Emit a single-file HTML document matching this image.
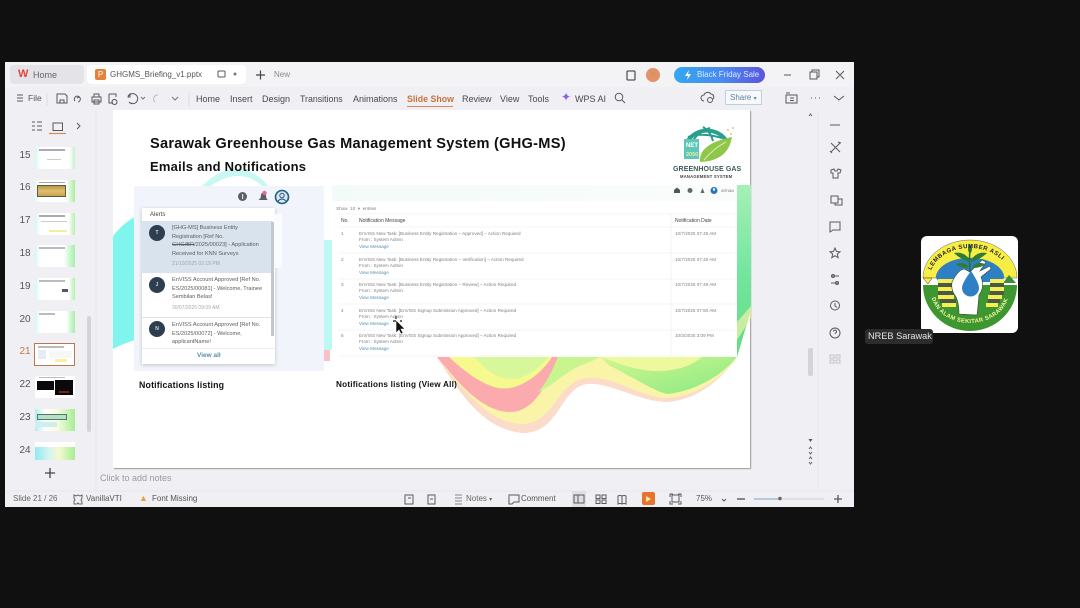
<!DOCTYPE html>
<html><head><meta charset="utf-8">
<style>
html,body{margin:0;padding:0;width:1080px;height:608px;overflow:hidden;background:#101011;font-family:"Liberation Sans",sans-serif}
.a{position:absolute}
.t{position:absolute;white-space:nowrap;color:#4a4a4e;font-size:9px;line-height:12px}
.n{position:absolute;left:17px;width:16px;text-align:center;font-size:10px;color:#555;line-height:12px}
.th{position:absolute;left:35px;width:40px;height:22px;background:#fff;overflow:hidden}
.rb{font-size:9px;color:#49494d;top:93px}
.nt{position:absolute;white-space:nowrap;font-size:4.6px;line-height:6.4px;color:#808084}
.al{position:absolute;left:172px;white-space:nowrap;font-size:5.6px;line-height:8.5px;color:#5c5c5c}
.av{position:absolute;left:149px;width:16px;height:16px;border-radius:50%;background:#2e3d4f;color:#ddd;font-size:5px;line-height:16px;text-align:center;font-weight:bold}
svg{position:absolute;overflow:visible}
</style></head><body>
<div class="a" style="left:5px;top:62px;width:849px;height:445px;background:#f0f0f4"></div>
<div class="a" style="left:5px;top:62px;width:849px;height:25px;background:#f3f3f6"></div>
<div class="a" style="left:10px;top:65px;width:74px;height:19px;background:#e4e4e8;border-radius:4px"></div>
<div class="a" style="left:87px;top:65px;width:159px;height:19px;background:#fff;border-radius:4px"></div>
<div class="t" style="left:18px;top:68px;color:#e0453f;font-size:11px;font-weight:bold">W</div>
<div class="t" style="left:33px;top:69px;color:#666">Home</div>
<div class="a" style="left:95px;top:69px;width:11px;height:11px;background:#e5813a;border-radius:2px;color:#fff;font-size:8px;line-height:11px;text-align:center">P</div>
<div class="t" style="left:110px;top:69px;color:#555;font-size:8px">GHGMS_Briefing_v1.pptx</div>
<svg style="left:0;top:0" width="1080" height="608" fill="none" stroke="#58585c" stroke-width="1">
<rect x="218" y="71" width="7" height="6" rx="1"/><circle cx="235" cy="74" r="1.5" fill="#777" stroke="none"/>
<path d="M256 75h9M260.500 70.500v9" stroke="#444" stroke-width="1.200"/>
<rect x="627" y="71" width="8" height="9" rx="1" stroke-width="1.300"/>
<path d="M784 75h7M810 72h7v7h-7zM812 72v-2h7v7h-2M836 71l8 8M844 71l-8 8"/>
<path d="M17 95h6M17 98h6M17 101h6M57 94h8l2 2v7h-10zM60 103v-3h4v3M75 101a3 3 0 1 1 3 1M77 98l2-1M92 97h9v5h-9zM94 97v-3h5v3M94 100h5v4h-5zM109 94h7v3M109 94v9h4M117 102a2.500 2.500 0 1 1 0-.1M128 96l2-2v3h-2a5 5 0 1 1 1 5"/>
<path d="M141 97l2 2 2-2" stroke="#777"/><path d="M155 102a4 4 0 0 1 3-7" stroke="#bbb"/>
<path d="M172 97l3 3 3-3" stroke="#777"/>
<path d="M189 93v13" stroke="#ddd"/><path d="M47 93v13" stroke="#ddd"/>
<circle cx="619" cy="97" r="3.800"/><path d="M622 100l3 3"/>
<path d="M704 101a3 3 0 0 1 0-6 4 4 0 0 1 7-1 3 3 0 0 1 2 5"/><circle cx="710" cy="100" r="2.500"/>
<path d="M786 95h11v8h-11zM786 93h4M790 98h4M790 100.500h4"/>
<path d="M811 98h1M815 98h1M819 98h1M834 96l5 4 5-4"/>
<path d="M32 122h3M32 126h3M32 130h3M37 122h5M37 126h5M37 130h5" stroke-width="1"/>
<rect x="53" y="123" width="9.500" height="7.500"/><path d="M49 133.500h17" stroke="#d6895a" stroke-width="1.200"/>
<path d="M77 123l3 3-3 3"/>
<path d="M45 473h10M50 468v10" stroke="#444" stroke-width="1.300"/>
<path d="M96 110v381M5 491h849M818 110v381" stroke="#e8e8ec"/>
</svg>
<div class="a" style="left:646px;top:68px;width:14px;height:14px;background:#e59068;border-radius:50%;color:#b95;font-size:6px;line-height:14px;text-align:center">N</div>
<div class="a" style="left:674px;top:67px;width:91px;height:16px;border-radius:8px;background:linear-gradient(90deg,#33a8f0,#4a88ee 55%,#5a55dd)"></div>
<div class="t" style="left:697px;top:69px;color:#dbeafe;font-size:8px">Black Friday Sale</div>
<svg style="left:0;top:0" width="1080" height="608"><path d="M689 70l-4 6h3l-1 4 4-6h-3z" fill="#fff"/></svg>
<div class="t" style="left:274px;top:69px;color:#8a8a8e;font-size:8px">New</div>
<div class="t" style="left:28px;top:92px;color:#555;font-size:8.500px">File</div>
<div class="t rb" style="left:196px">Home</div>
<div class="t rb" style="left:230px">Insert</div>
<div class="t rb" style="left:262px">Design</div>
<div class="t rb" style="left:300px;font-size:8.800px">Transitions</div>
<div class="t rb" style="left:353px">Animations</div>
<div class="t rb" style="left:407px;color:#c8703a;font-weight:bold;font-size:8.800px">Slide Show</div>
<div class="a" style="left:407px;top:106px;width:46px;height:1px;background:#d88a58"></div>
<div class="t rb" style="left:462px">Review</div>
<div class="t rb" style="left:500px">View</div>
<div class="t rb" style="left:528px">Tools</div>
<div class="t" style="left:561px;top:91px;color:#8e5fe0;font-size:12px">✦</div>
<div class="t rb" style="left:575px">WPS AI</div>
<div class="a" style="left:725px;top:90px;width:37px;height:15px;box-sizing:border-box;border:1px solid #b9d3df;background:#f8f8fa;color:#5a86a0;font-size:8px;line-height:13px;padding-left:4px">Share <span style="font-size:6px">▾</span></div>

<!-- thumbnails -->
<div class="n" style="top:150px">15</div><div class="n" style="top:182px">16</div><div class="n" style="top:215px">17</div><div class="n" style="top:248px">18</div><div class="n" style="top:281px">19</div><div class="n" style="top:314px">20</div><div class="n" style="top:346px;color:#c07a4a">21</div><div class="n" style="top:379px">22</div><div class="n" style="top:412px">23</div><div class="n" style="top:445px">24</div>
<div class="th" style="top:147px;background:linear-gradient(90deg,#d5f6f3 0,#fff 14%,#fff 86%,#c8f0cc 100%)"><div class="a" style="left:4px;top:2px;width:26px;height:1.500px;background:#aab"></div><div class="a" style="left:12px;top:12px;width:14px;height:1px;background:#ccc"></div></div>
<div class="th" style="top:180px;background:linear-gradient(90deg,#e4f8f3 0,#fff 14%,#fff 78%,#a8ee9c 100%)"><div class="a" style="left:2px;top:5px;width:27px;height:10px;background:linear-gradient(#b89848,#e0c070,#c8a050);border:1px solid #5c5a40"></div><div class="a" style="left:4px;top:2px;width:26px;height:1px;background:#aaa"></div></div>
<div class="th" style="top:213px;background:linear-gradient(90deg,#d5f6f3 0,#fff 14%,#fff 84%,#b4efaa 100%)"><div class="a" style="left:4px;top:2px;width:26px;height:1.500px;background:#aaa"></div><div class="a" style="left:6px;top:8px;width:26px;height:1px;background:#ccc"></div><div class="a" style="left:14px;top:17px;width:18px;height:2px;background:#f3ee9c"></div></div>
<div class="th" style="top:245px;background:linear-gradient(90deg,#d5f6f3 0,#fff 14%,#fff 72%,#a5eeaa 100%)"><div class="a" style="left:4px;top:2px;width:26px;height:1.500px;background:#bbb"></div></div>
<div class="th" style="top:278px;background:linear-gradient(90deg,#d5f6f3 0,#fff 14%,#fff 84%,#b4efaa 100%)"><div class="a" style="left:4px;top:2px;width:26px;height:1.500px;background:#bbb"></div><div class="a" style="left:27px;top:11px;width:6px;height:3px;background:#556"></div></div>
<div class="th" style="top:311px;background:linear-gradient(90deg,#d5f6f3 0,#fff 14%,#fff 78%,#a5eeaa 100%)"><div class="a" style="left:4px;top:2px;width:16px;height:2px;background:#bbb"></div></div>
<div class="a" style="left:34px;top:343px;width:41px;height:23px;box-sizing:border-box;border:1px solid #b87a4c;background:#fff"><div class="a" style="left:3px;top:2px;width:26px;height:1.500px;background:#bbb"></div><div class="a" style="left:3px;top:6px;width:8px;height:9px;background:#e4ecf5"></div><div class="a" style="left:14px;top:7px;width:23px;height:7px;background:#f6f8f8"></div><div class="a" style="left:20px;top:15px;width:12px;height:3px;background:#f6f0a8"></div></div>
<div class="th" style="top:376px"><div class="a" style="left:2px;top:5px;width:17px;height:9px;background:#08090c"></div><div class="a" style="left:20px;top:4px;width:18px;height:15px;background:#0a0a0c"></div><div class="a" style="left:4px;top:1px;width:26px;height:1px;background:#bbb"></div><div class="a" style="left:24px;top:15px;width:10px;height:2px;background:#722"></div></div>
<div class="th" style="top:409px;background:linear-gradient(90deg,#b0eeee 0,#fff 25%,#fbfbe0 55%,#a5ee95 100%)"><div class="a" style="left:2px;top:5px;width:28px;height:4px;background:#b8dfc8;border:1px solid #4a7a70"></div><div class="a" style="left:0;top:13px;width:22px;height:5px;background:#cfeef0"></div></div>
<div class="th" style="top:442px;height:18px;background:linear-gradient(90deg,#90eaf0 0,#d5f4f2 35%,#f6f8d0 60%,#a5ee95 100%)"><div class="a" style="left:0;top:0;width:40px;height:5px;background:#fff"></div></div>
<div class="a" style="left:87px;top:316px;width:4px;height:116px;background:#d4d4d8;border-radius:2px"></div>

<!-- slide -->
<div class="a" style="left:113px;top:110px;width:637px;height:358px;background:#fff;box-shadow:1px 1px 1px #999"></div>
<svg style="left:0;top:0" width="1080" height="608">
<defs><linearGradient id="gw" x1="0" y1="0" x2="1" y2="1"><stop offset="0" stop-color="#d4f68e"/><stop offset="1" stop-color="#86ea84"/></linearGradient>
<linearGradient id="gr" x1="0" y1="0" x2="0" y2="1"><stop offset="0" stop-color="#a6f0b8"/><stop offset=".5" stop-color="#74e6a0"/><stop offset="1" stop-color="#62dc82"/></linearGradient>
<clipPath id="sl"><rect x="113" y="110" width="637" height="358"/></clipPath></defs>
<path d="M113 236Q124 222 135 217V340Q122 344 113 349z" fill="#80f5ee"/>
<path d="M202 186Q220 168 238 169Q256 170 268 186z" fill="#c8f8f2"/>
<path d="M210 186Q226 176 238 176Q252 176 262 186z" fill="#fff"/>
<path d="M324 240h8v110h-8z" fill="#a2f5ee" opacity=".7"/>
<path d="M437 357C455 385 480 430 523 433C560 433 560 388 587 384C610 382 640 402 667 402C700 400 725 375 737 357z" fill="#fbdccb"/>
<path d="M437 357C458 385 490 425 523 424C555 422 555 385 585 378C615 375 640 398 667 398C700 396 725 375 737 357z" fill="#f9f4a8"/>
<path d="M437 357C455 378 480 412 510 412C535 412 548 382 558 357z" fill="#fbabae"/>
<path d="M449 357C465 372 490 392 510 388C530 384 545 368 552 357z" fill="#f5f98e"/>
<path d="M475 357Q495 383 520 378Q540 370 548 357z" fill="#d8f79a"/>
<path d="M558 357C552 372 545 385 538 392C555 385 565 370 590 362L600 357z" fill="#c8f590"/>
<path d="M610 366C635 378 655 392 668 394C700 390 725 372 737 357H600z" fill="url(#gw)"/>
<path d="M615 362C640 372 670 376 695 362L702 357H600z" fill="#eef89c"/>
<path d="M737 185H751V310L737 357z" fill="url(#gr)"/>
<path d="M737 322L751 306V318L737 340z" fill="#f2f2a8" opacity=".7"/>
<path d="M324 350h6v11h-6z" fill="#f8b0ba" opacity=".8"/>
</svg>
<div class="t" style="left:150px;top:136px;font-size:14.600px;line-height:16px;font-weight:bold;color:#111;letter-spacing:.26px">Sarawak Greenhouse Gas Management System (GHG-MS)</div>
<div class="t" style="left:150px;top:159px;font-size:13px;line-height:16px;font-weight:bold;color:#111;letter-spacing:.22px">Emails and Notifications</div>

<!-- logo -->
<svg style="left:0;top:0" width="1080" height="608">
<path d="M686 145a22 20 0 0 1 41-3" fill="none" stroke="#28a08e" stroke-width="4"/>
<path d="M690 145q8-14 20-17M703 127q8 5 10 14M688 137q14-5 34 1" fill="none" stroke="#2a9c8c" stroke-width="2"/>
<rect x="684" y="139" width="15" height="20" fill="#5ec8b8"/>
<text x="686" y="147" font-family="Liberation Sans" font-size="6" font-weight="bold" fill="#fff">NET</text>
<text x="686" y="156" font-family="Liberation Sans" font-size="5.500" font-weight="bold" fill="#e8f29a">2050</text>
<path d="M700 162q-2-18 32-25q-4 24-32 25z" fill="#8fc74a"/>
<path d="M704 160q10-12 22-18" stroke="#d6ebaa" fill="none"/>
<circle cx="728" cy="130" r="1" fill="#d8c888"/><circle cx="731" cy="134" r="1" fill="#d8c888"/><circle cx="733" cy="128" r="1" fill="#d8c888"/>
</svg>
<div class="t" style="left:673px;top:165px;font-size:7px;line-height:9px;font-weight:bold;color:#3a5a5a;letter-spacing:.1px">GREENHOUSE GAS</div>
<div class="t" style="left:680px;top:174px;font-size:4.200px;line-height:6px;font-weight:bold;color:#444;letter-spacing:.2px">MANAGEMENT SYSTEM</div>

<!-- left screenshot -->
<div class="a" style="left:134px;top:186px;width:190px;height:185px;background:#f1f5fb"></div>
<div class="a" style="left:142px;top:208px;width:133px;height:156px;background:#fff;box-shadow:0 1px 4px rgba(0,0,0,.2)"></div>
<div class="a" style="left:274px;top:214px;width:8px;height:54px;background:#fafbfd"></div>
<div class="t" style="left:150px;top:211px;font-size:6px;line-height:9px;color:#444">Alerts</div>
<div class="a" style="left:142px;top:221px;width:131px;height:52px;background:#d8e3ee"></div>
<div class="a" style="left:271px;top:222px;width:3px;height:114px;background:#c4c8ce"></div>
<div class="a" style="left:142px;top:317px;width:129px;height:1px;background:#e2e2e2"></div>
<div class="a" style="left:142px;top:348px;width:133px;height:1px;background:#eee"></div>
<div class="av" style="top:225px">T</div><div class="av" style="top:277px">J</div><div class="av" style="top:321px">N</div>
<div class="al" style="top:224px">[GHG-MS] Business Entity<br>Registration [Ref No.<br><s>GHG/BR</s>/2025/00023] - Application<br>Received for KNN Surveys</div>
<div class="al" style="top:260px;font-size:5px;color:#9aa">21/10/2025 02:19 PM</div>
<div class="al" style="top:276px">EnVISS Account Approved [Ref No.<br>ES/2025/00081] - Welcome, Trainee<br>Sembilan Belas!</div>
<div class="al" style="top:304px;font-size:5px;color:#aaa">30/07/2025 09:09 AM</div>
<div class="al" style="top:321px">EnVISS Account Approved [Ref No.<br>ES/2025/00072] - Welcome,<br>applicantName!</div>
<div class="t" style="left:197px;top:351px;font-size:6.500px;line-height:10px;color:#5c8ea8;font-weight:bold">View all</div>
<svg style="left:0;top:0" width="1080" height="608">
<circle cx="242.500" cy="196.500" r="4.500" fill="#5a6068"/><rect x="242" y="194" width="1.200" height="5" fill="#ddd"/>
<path d="M258 200q3-1 3-5a2.500 2.500 0 0 1 5 0q0 4 2 5z" fill="#5a5c68"/><circle cx="264.500" cy="193" r="2.200" fill="#e86a8a"/>
<circle cx="282" cy="197" r="6.500" fill="#d8e4ee" stroke="#1f5f82" stroke-width="1.600"/><circle cx="282" cy="195.500" r="2.200" fill="none" stroke="#1f5f82"/><path d="M278 201q4-4 8 0" fill="none" stroke="#1f5f82"/>
</svg>
<div class="t" style="left:139px;top:380px;font-size:8.800px;line-height:11px;font-weight:bold;color:#111;letter-spacing:.17px">Notifications listing</div>

<!-- right screenshot -->
<div class="a" style="left:332px;top:185px;width:405px;height:172px;background:#fff"></div>
<div class="a" style="left:332px;top:185px;width:405px;height:16px;background:linear-gradient(90deg,#f3fbf8,#fafcfc)"></div>
<svg style="left:0;top:0" width="1080" height="608">
<path d="M674 190l3-2.500 3 2.500v3h-6z" fill="#555"/><circle cx="690" cy="190.500" r="2.500" fill="#666"/><path d="M700.500 193l2-5 2 5z" fill="#666"/>
<circle cx="714" cy="190.500" r="3.500" fill="#2c74b5"/><circle cx="714" cy="189.500" r="1.200" fill="#fff"/>
<path d="M338 214H737M338 227H737M338 253H737M338 279H737M338 304H737M338 330H737M338 356H737M671 214V356" stroke="#f0f1f3" stroke-width=".8"/>
<path d="M396 320l0 13 3-3 2 4 2-1-2-4h4z" fill="#111" stroke="#fff" stroke-width=".6"/>
<path d="M396 316v3M393 321h3M400 321h2" stroke="#111" stroke-width="1.200"/>
</svg>
<div class="nt" style="left:721px;top:188px">arinaa</div>
<div class="nt" style="left:336px;top:206px">Show&nbsp; 10 &nbsp;▾&nbsp; entries</div>
<div class="nt" style="left:341px;top:218px;color:#444;font-size:5px">No.</div>
<div class="nt" style="left:359px;top:218px;color:#444;font-size:5px">Notification Message</div>
<div class="nt" style="left:675px;top:218px;color:#444;font-size:5px">Notification Date</div>
<div class="nt" style="left:341px;top:231px">1</div>
<div class="nt" style="left:359px;top:231px">EnVISS New Task: [Business Entity Registration – Approved] – Action Required<br>From : System Admin<br><span style="color:#5b8fb0">View Message</span></div>
<div class="nt" style="left:675px;top:231px">10/7/2025 07:49 AM</div>
<div class="nt" style="left:341px;top:257px">2</div>
<div class="nt" style="left:359px;top:257px">EnVISS New Task: [Business Entity Registration – Verification] – Action Required<br>From : System Admin<br><span style="color:#5b8fb0">View Message</span></div>
<div class="nt" style="left:675px;top:257px">10/7/2025 07:49 AM</div>
<div class="nt" style="left:341px;top:282px">3</div>
<div class="nt" style="left:359px;top:282px">EnVISS New Task: [Business Entity Registration – Review] – Action Required<br>From : System Admin<br><span style="color:#5b8fb0">View Message</span></div>
<div class="nt" style="left:675px;top:282px">10/7/2025 07:49 AM</div>
<div class="nt" style="left:341px;top:308px">4</div>
<div class="nt" style="left:359px;top:308px">EnVISS New Task: [EnVISS Signup Submission Approved] – Action Required<br>From : System Admin<br><span style="color:#5b8fb0">View Message</span></div>
<div class="nt" style="left:675px;top:308px">10/7/2025 07:50 AM</div>
<div class="nt" style="left:341px;top:333px">5</div>
<div class="nt" style="left:359px;top:333px">EnVISS New Task: [EnVISS Signup Submission Approved] – Action Required<br>From : System Admin<br><span style="color:#5b8fb0">View Message</span></div>
<div class="nt" style="left:675px;top:333px">10/3/2025 3:09 PM</div>
<div class="t" style="left:336px;top:379px;font-size:8.200px;line-height:11px;font-weight:bold;color:#111;letter-spacing:.2px">Notifications listing (View All)</div>

<!-- right rail + scroll -->
<svg style="left:0;top:0" width="1080" height="608" fill="none" stroke="#5a5a5e" stroke-width="1">
<path d="M830 125h10"/>
<path d="M831 143l9 9M840 143l-9 9M838 142l3 1M830 151l2 2"/>
<path d="M831 170l3-1 1 2h2l1-2 3 1-1 3-2 0v5h-5v-5l-2 0z"/>
<path d="M831 196h7v7h-7zM838 199h4v6h-7v-2"/>
<path d="M830 222h10v8h-7l-3 2z"/>
<path d="M835 248l1.500 3.500 3.500.3-2.700 2.300.9 3.600-3.200-2-3.200 2 .9-3.600-2.700-2.300 3.500-.3z"/>
<path d="M831 276h8M831 283h8"/><circle cx="833" cy="276" r="1.500"/><circle cx="837" cy="283" r="1.500"/>
<circle cx="835" cy="305.500" r="4.500"/><path d="M835 303v3l2 1.500"/>
<circle cx="835" cy="333" r="5"/><path d="M833.500 331.500a1.500 1.500 0 1 1 2 1.500q-.5.300-.5 1"/>
<g stroke="#c4c4c8"><rect x="830" y="355" width="4" height="3"/><rect x="836" y="355" width="4" height="3"/><rect x="830" y="360" width="4" height="3"/><rect x="836" y="360" width="4" height="3"/></g>
<path d="M809 116l1.500-2 1.500 2" stroke="#666"/>
<path d="M808.500 439h4l-2 3z" fill="#555" stroke="none"/>
<path d="M809 449l1.500-2 1.500 2M809 452l1.500 2 1.500-2M809 459l1.500-2 1.500 2M809 462l1.500 2 1.500-2" stroke="#666"/>
</svg>
<div class="a" style="left:808px;top:348px;width:5px;height:28px;background:#d4d4d8;border-radius:2px"></div>

<!-- notes / status -->
<div class="t" style="left:100px;top:472px;font-size:9px;color:#9a9a9e">Click to add notes</div>
<div class="t" style="left:13px;top:493px;font-size:8px;color:#666">Slide 21 / 26</div>
<svg style="left:0;top:0" width="1080" height="608" fill="none" stroke="#666"><path d="M74 495l2 1 2-1 2 1 2-1v3l-1 2 1 2v2h-3l-1-1-1 1h-3v-3l1-1-1-2z"/></svg>
<div class="t" style="left:86px;top:493px;font-size:8px;color:#555">VanillaVTI</div>
<div class="t" style="left:139px;top:492px;font-size:9px;color:#e8a33c">▲</div>
<div class="t" style="left:152px;top:493px;font-size:8px;color:#555">Font Missing</div>
<div class="t" style="left:466px;top:493px;font-size:8px;color:#666">Notes <span style="font-size:6px">▾</span></div>
<div class="t" style="left:521px;top:493px;font-size:8px;color:#555">Comment</div>
<div class="t" style="left:696px;top:493px;font-size:8px;color:#555">75%</div>
<div class="a" style="left:572px;top:491px;width:14px;height:16px;background:#e0e0e4"></div>
<div class="a" style="left:642px;top:492px;width:13px;height:13px;background:#e8732e;border-radius:2px"></div>
<svg style="left:0;top:0" width="1080" height="608" fill="none" stroke="#5a5a5e" stroke-width="1">
<rect x="405" y="495" width="8" height="9"/><path d="M408 498h3"/>
<rect x="428" y="495" width="7" height="9"/><path d="M430 499h3"/>
<path d="M455 495h7M455 498h7M455 501h7M455 504h7" stroke="#888"/>
<path d="M509 495h10v7h-5l-2 2h-3z"/>
<rect x="574" y="495" width="10" height="8"/><path d="M578 495v8"/>
<rect x="596" y="495" width="4" height="3.500"/><rect x="602" y="495" width="4" height="3.500"/><rect x="596" y="500" width="4" height="3.500"/><rect x="602" y="500" width="4" height="3.500"/>
<path d="M618 496q2-1 4 0q2-1 4 0v8q-2-1-4 0q-2-1-4 0zM622 496v8"/>
<path d="M646 496l5 3-5 3z" fill="#ffe8a0" stroke="none"/>
<rect x="672" y="495" width="7" height="7"/><path d="M670 497v-3h3M681 497v-3h-3M670 501v3h3M681 501v3h-3"/>
<path d="M722 499l2 2 2-2"/>
<path d="M737 499h8" stroke-width="1.400"/>
<path d="M754 499h25" stroke="#7ba6c0"/><path d="M782 499h42" stroke="#d2d2d6"/><circle cx="780" cy="498.500" r="1.800" fill="#666" stroke="none"/>
<path d="M834 499h8M838 495v8" stroke-width="1.300"/>
</svg>

<!-- participant -->
<div class="a" style="left:921px;top:236px;width:97px;height:97px;background:#fff;border-radius:6px"></div>
<svg style="left:0;top:0" width="1080" height="608">
<defs>
<path id="arcTop" d="M930 278a40 30 0 0 1 80 0"/>
<path id="arcBot" d="M931 292a39 31 0 0 0 78 0"/>
</defs>
<path d="M923 278a47 38 0 0 1 94 0h-13a34 20 0 0 0-68 0z" fill="#f7ee45" stroke="#444" stroke-width=".4"/>
<path d="M936 278a34 20 0 0 1 68 0l-3 4h-62z" fill="#2f7fc4"/>
<path d="M923 278l9 0-4 6z" fill="#f7ee45" stroke="#333" stroke-width=".5"/>
<path d="M1003 283l6-8 7 8z" fill="#3a8d3a"/>
<path d="M923 285h94a47 46 0 0 1-94 0z" fill="#3e9630"/>
<path d="M938 279h16v4h-16zM938 287h16v4h-16zM938 295h16v4h-16zM942 303h14v4h-14zM990 279h14v4h-14zM990 287h14v4h-14zM988 295h14v4h-14zM986 303h12v4h-12z" fill="#f7ee50"/>
<path d="M938 283h16v4h-16zM938 291h16v4h-16zM940 299h16v4h-16zM990 283h14v4h-14zM990 291h14v4h-14zM988 299h12v4h-12z" fill="#4a5a4a"/>
<path d="M952 282q6-12 12-13l6 3 12-12 4 2-6 9 10-5 1 3-10 8q4 10-2 18q-1 12-2 20l-18-1q0-14-5-20q-3-5-2-12z" fill="#fff" stroke="#2c4c2c" stroke-width=".6"/>
<path d="M971 271q8 12 8 17a8.500 8.500 0 0 1-17 0q0-5 9-17z" fill="#2f7fc4"/>
<path d="M970 272q-1-14 0-22" stroke="#2c6c2c" stroke-width="1.500" fill="none"/>
<path d="M970 262q-10-3-16-9q10-2 16 7zM971 262q10-3 16-9q-10-2-16 7zM970 254q-4-5 0-10q4 5 0 10zM968 268q-8 0-12-4q8-3 12 2zM973 268q8 0 12-4q-8-3-12 2z" fill="#2e7d32"/>
<text font-family="Liberation Sans" font-size="6" font-weight="bold" fill="#222" letter-spacing=".5"><textPath href="#arcTop" startOffset="8">LEMBAGA SUMBER ASLI</textPath></text>
<text font-family="Liberation Sans" font-size="5.800" font-weight="bold" fill="#f6f6a0" letter-spacing=".35"><textPath href="#arcBot" startOffset="6">DAN ALAM SEKITAR SARAWAK</textPath></text>
</svg>
<div class="a" style="left:865px;top:329px;width:68px;height:15px;background:#2c2c2e;border-radius:3px"></div>
<div class="t" style="left:868px;top:330px;color:#e4e4e4;font-size:9.200px;line-height:13px">NREB Sarawak</div>
</body></html>
